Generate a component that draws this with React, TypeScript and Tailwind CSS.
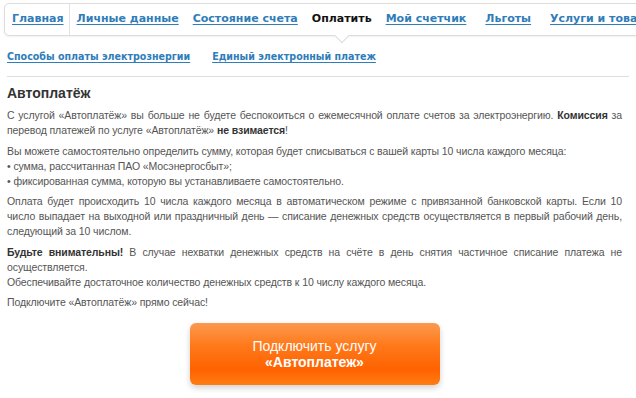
import React from 'react';

const tabs = [
    {label: 'Главная', active: false},
    {label: 'Личные данные', active: false},
    {label: 'Состояние счета', active: false},
    {label: 'Оплатить', active: true},
    {label: 'Мой счетчик', active: false},
    {label: 'Льготы', active: false},
    {label: 'Услуги и товары', active: false},
];

const TabBar = () => {
    return (
        <div className="ml-[4px] mt-[3px] h-[33px] w-[720px] shrink-0 rounded-[5px] border border-[#dcdcdc] bg-white shadow-[0_1px_2px_rgba(0,0,0,0.06)] flex items-center relative font-['DejaVu_Sans',sans-serif] text-[11px] font-bold whitespace-nowrap">
            {tabs.map((t, i) => (
                <div
                    key={t.label}
                    className={
                        i === 0
                            ? 'h-full flex items-center pl-[6px] pr-[4px] border-r border-[#e3e3e3]'
                            : t.active
                              ? 'h-full flex items-center px-[7px] relative'
                              : i >= 5
                                ? 'h-full flex items-center px-[6px] ml-[5px]'
                                : 'h-full flex items-center px-[6px]'
                    }>
                    {t.active ? (
                        <span className="text-[#111]">{t.label}</span>
                    ) : (
                        <a href="#" className="text-[#2f7db9] underline underline-offset-2 px-[1px]">
                            {t.label}
                        </a>
                    )}
                    {t.active && (
                        <span className="absolute left-1/2 -translate-x-1/2 bottom-[-6px] w-[11px] h-[11px] bg-white border-r border-b border-[#dcdcdc] rotate-45" />
                    )}
                </div>
            ))}
        </div>
    );
};

const SubNav = () => {
    return (
        <div className="mx-[7px] mt-[14px] pb-[13px] border-b border-[#dedede] flex gap-[22px] font-['DejaVu_Sans_Condensed','DejaVu_Sans',sans-serif] text-[10.6px] leading-[13px] font-bold whitespace-nowrap">
            <a href="#" className="text-[#2f7db9] underline underline-offset-2">
                Способы оплаты электрознергии
            </a>
            <a href="#" className="text-[#2f7db9] underline underline-offset-2">
                Единый электронный платеж
            </a>
        </div>
    );
};

export default function App() {
    return (
        <div className="w-[636px] h-[398px] overflow-hidden bg-white">
            <TabBar />
            <SubNav />
            <div className="pl-[7px] pr-[14px] font-['Liberation_Sans',Arial,sans-serif] text-[10.5px] tracking-[-0.1px] leading-[15px] text-[#555]">
                <h1 className="text-[14px] font-bold text-[#333] mt-[7px] mb-[6px] leading-[18px] tracking-normal">
                    Автоплатёж
                </h1>
                <p className="text-justify mb-[5.5px]">
                    С услугой «Автоплатёж» вы больше не будете беспокоиться о
                    ежемесячной оплате счетов за электроэнергию.{' '}
                    <b className="text-[#333]">Комиссия</b> за перевод платежей по
                    услуге «Автоплатёж» <b className="text-[#333]">не взимается</b>!
                </p>
                <p className="mb-[5.5px]">
                    Вы можете самостоятельно определить сумму, которая будет
                    списываться с вашей карты 10 числа каждого месяца:
                    <br />• сумма, рассчитанная ПАО «Мосэнергосбыт»;
                    <br />• фиксированная сумма, которую вы устанавливаете
                    самостоятельно.
                </p>
                <p className="text-justify mb-[5.5px]">
                    Оплата будет происходить 10 числа каждого месяца в
                    автоматическом режиме с привязанной банковской карты. Если 10
                    число выпадает на выходной или праздничный день — списание
                    денежных средств осуществляется в первый рабочий день,
                    следующий за 10 числом.
                </p>
                <p className="text-justify mb-[5.5px]">
                    <b className="text-[#333]">Будьте внимательны!</b> В случае
                    нехватки денежных средств на счёте в день снятия частичное
                    списание платежа не осуществляется.
                    <br />
                    Обеспечивайте достаточное количество денежных средств к 10
                    числу каждого месяца.
                </p>
                <p>Подключите «Автоплатёж» прямо сейчас!</p>
                <div className="flex justify-center mt-[13px]">
                    <button className="w-[250px] h-[62px] rounded-[6px] bg-[linear-gradient(to_bottom,#fb9a4f_0%,#ff7a1c_35%,#ff6200_75%,#ff7d12_100%)] shadow-[0_3px_6px_rgba(0,0,0,0.18)] text-white text-[14px] leading-[16px] tracking-normal font-['Liberation_Sans',Arial,sans-serif]">
                        Подключить услугу
                        <br />
                        <b>«Автоплатеж»</b>
                    </button>
                </div>
            </div>
        </div>
    );
}
